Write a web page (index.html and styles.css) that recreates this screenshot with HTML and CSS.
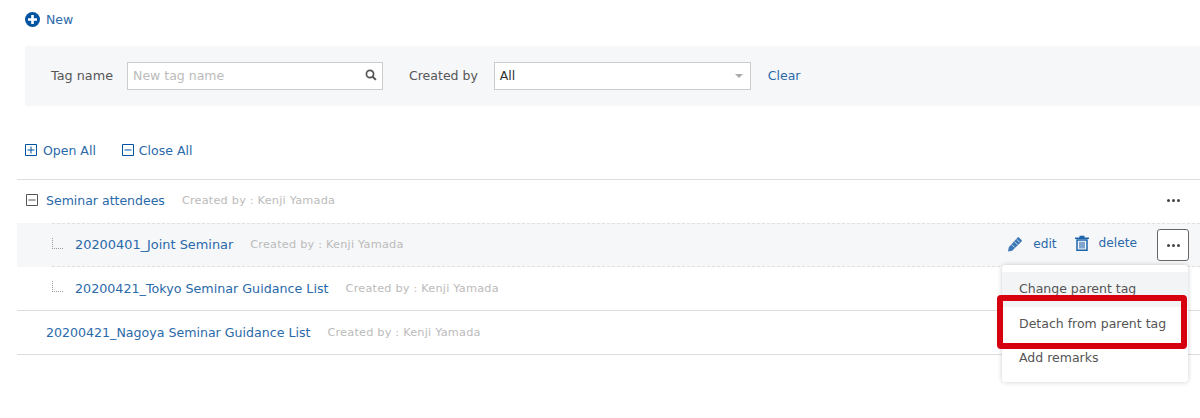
FILE: index.html
```html
<!DOCTYPE html>
<html lang="en">
<head>
<meta charset="utf-8">
<title>Tags</title>
<link rel="stylesheet" href="styles.css">
</head>
<body>
<div class="toolbar">
  <a class="link new">
    <svg class="ico-new" viewBox="0 0 16 16"><circle cx="8" cy="8" r="8" fill="#00549f"/><path d="M8 3.200v9.600M3.200 8h9.600" stroke="#fff" stroke-width="2.800"/></svg>
    New
  </a>
</div>
<form class="filter">
  <span class="label">Tag name</span>
  <div class="field search">
    <span class="placeholder">New tag name</span>
    <svg class="ico-search" viewBox="0 0 12 12"><circle cx="5" cy="5" r="3.600" fill="none" stroke="#555" stroke-width="1.700"/><path d="M7.700 7.700l3.200 3.200" stroke="#555" stroke-width="2"/></svg>
  </div>
  <span class="label created">Created by</span>
  <div class="field select">
    <span>All</span>
    <span class="caret"></span>
  </div>
  <a class="link clear">Clear</a>
</form>
<div class="openclose">
  <a class="link toggle"><svg class="box" viewBox="0 0 12 12"><path d="M.5.5h11v11H.5zM2.500 6h7M6 2.500v7" fill="none" stroke="#00549f"/></svg>Open All</a>
  <a class="link toggle"><svg class="box" viewBox="0 0 12 12"><path d="M.5.5h11v11H.5zM2.500 6h7" fill="none" stroke="#00549f"/></svg>Close All</a>
</div>
<div class="tree">
  <div class="row parent head">
    <svg class="box tree-box" viewBox="0 0 12 12"><path d="M.5.5h11v11H.5zM2.500 6h7" fill="none" stroke="#555"/></svg>
    <a class="link name name-short">Seminar attendees</a>
    <span class="meta">Created by : Kenji Yamada</span>
    <span class="dots"><i></i><i></i><i></i></span>
  </div>
  <div class="row child hover">
    <span class="elbow"></span>
    <a class="link name name-digits">20200401_Joint Seminar</a>
    <span class="meta">Created by : Kenji Yamada</span>
    <div class="actions">
      <a class="link action action-edit">
        <svg class="ico-edit" viewBox="0 0 16 16"><path d="M11.900 1.400l2.700 2.700a1 1 0 0 1 0 1.300L5.200 14.700 1 15.500l.8-4.200 8.800-9.900a1 1 0 0 1 1.300 0z" fill="#3b78b5"/><path d="M9.800 3.400l2.800 2.800M7.600 5.800l2.800 2.800M4.800 8.600l2.800 2.800" stroke="#f6f7f9" stroke-width=".8"/></svg>
        edit
      </a>
      <a class="link action action-delete">
        <svg class="ico-trash" viewBox="0 0 14 16"><path d="M0 2.600h14v1.500H0zM4.500 2.600V.7h5v1.900" fill="#1d65ab"/><path d="M2 5h10v10.300H2z" fill="none" stroke="#1d65ab" stroke-width="1.500"/><path d="M5 6.800v6.600M7 6.800v6.600M9 6.800v6.600" stroke="#1d65ab" stroke-width="1.100"/></svg>
        delete
      </a>
      <button class="more" type="button"><span class="dots"><i></i><i></i><i></i></span></button>
    </div>
  </div>
  <div class="row child last">
    <span class="elbow"></span>
    <a class="link name">20200421_Tokyo Seminar Guidance List</a>
    <span class="meta">Created by : Kenji Yamada</span>
  </div>
  <div class="row parent lone">
    <a class="link name name-long">20200421_Nagoya Seminar Guidance List</a>
    <span class="meta">Created by : Kenji Yamada</span>
  </div>
</div>
<ul class="menu">
  <li class="active">Change parent tag</li>
  <li class="detach">Detach from parent tag</li>
  <li>Add remarks</li>
</ul>
<div class="callout"></div>
</body>
</html>
```

FILE: styles.css
```css
* { box-sizing: border-box; }
html, body { margin: 0; padding: 0; }
body {
  width: 1200px;
  height: 418px;
  overflow: hidden;
  position: relative;
  background: #fff;
  font-family: "DejaVu Sans", sans-serif;
  font-size: 12.5px;
  color: #555;
}
.link { color: #2a69aa; text-decoration: none; }
.toolbar { height: 46px; padding: 11px 0 0 25px; }
.new { display: flex; align-items: center; gap: 6px; height: 16px; }
.ico-new { width: 15px; height: 15px; }
.filter {
  margin-left: 25px;
  height: 60px;
  background: #f6f7f9;
  display: flex;
  align-items: center;
  padding-left: 26px;
}
.label { color: #555; font-size: 12.8px; padding-bottom: 2px; }
.field {
  height: 28px;
  background: #fff;
  border: 1px solid #ccc;
  display: flex;
  align-items: center;
  justify-content: space-between;
  padding: 0 5px 2px;
  width: 256px;
}
.search { margin-left: 14px; padding-right: 5px; }
.placeholder { color: #bbb; }
.ico-search { width: 12px; height: 12px; }
.created { margin-left: 26px; font-size: 12.5px; }
.select { margin-left: 16px; width: 257px; color: #333; padding-right: 7px; }
.caret {
  width: 0; height: 0;
  margin-top: 2px;
  border-left: 4px solid transparent;
  border-right: 4px solid transparent;
  border-top: 4px solid #aaa;
}
.clear { margin-left: 17px; padding-bottom: 2px; }
.openclose {
  margin: 36px 0 0 25px;
  height: 16px;
  display: flex;
  gap: 26px;
}
.toggle { display: flex; align-items: center; gap: 6px; }
.toggle + .toggle { gap: 5px; }
.box { width: 12px; height: 12px; flex: none; }
.tree {
  margin: 21px 0 0 17px;
  border-top: 1px solid #ddd;
}
.row {
  display: flex;
  align-items: center;
  position: relative;
}
.parent { padding-left: 9px; }
.head { height: 43px; padding-bottom: 3px; }
.tree-box { margin-right: 8px; }
.lone { padding-left: 29px; border-top: 1px solid #ddd; border-bottom: 1px solid #ddd; height: 45px; }
.name { font-size: 12.7px; }
.name-short { font-size: 12.5px; }
.name-digits { font-size: 12.9px; }
.name-long { font-size: 12.6px; }
.meta { color: #bbb; font-size: 11.3px; margin-left: 17px; letter-spacing: .2px; }
.row > .dots { margin-left: auto; margin-right: 20px; }
.dots { display: inline-flex; gap: 2px; }
.dots i { width: 3px; height: 3px; border-radius: 50%; background: #444; display: block; }
.child { padding-left: 35px; }
.hover { background: #f6f7f9; height: 44px; }
.hover::before, .hover::after {
  content: "";
  position: absolute;
  left: 35px; right: 0;
  border-top: 1px dashed #e0e0e0;
}
.hover::before { top: 0; }
.hover::after { bottom: 0; }
.hover .name, .hover .meta { padding-bottom: 2px; }
.last { height: 43px; }
.elbow {
  width: 11px; height: 11px;
  margin-right: 12px;
  margin-top: -4px;
  border-left: 1px dotted #999;
  border-bottom: 1px dotted #999;
}
.actions {
  margin-left: auto;
  margin-right: 11px;
  display: flex;
  align-items: center;
}
.action { display: flex; align-items: center; gap: 10px; font-size: 12.2px; }
.action-edit { margin-right: 18px; padding-bottom: 3px; }
.action-delete { margin-right: 20px; padding-bottom: 4px; }
.ico-edit { width: 16px; height: 16px; }
.ico-trash { width: 14px; height: 16px; }
.more {
  width: 32px; height: 32px;
  background: #fff;
  border: 1px solid #666;
  border-radius: 3px;
  padding: 0;
  display: flex;
  align-items: center;
  justify-content: center;
}
.menu {
  position: absolute;
  left: 1002px; top: 265px;
  width: 186px;
  height: 117px;
  margin: 0;
  padding: 7px 0;
  list-style: none;
  background: #fff;
  border-radius: 3px;
  box-shadow: 0 0 5px rgba(0,0,0,.2);
  color: #555;
}
.menu li { height: 34.5px; padding: 0 0 2px 17px; display: flex; align-items: center; }
.menu .detach { padding-bottom: 0; }
.menu .active { background: #f3f4f6; }
.callout {
  position: absolute;
  left: 997px; top: 295px;
  width: 190px;
  height: 54px;
  border: 6px solid #d7000f;
  border-radius: 4px;
}
```
